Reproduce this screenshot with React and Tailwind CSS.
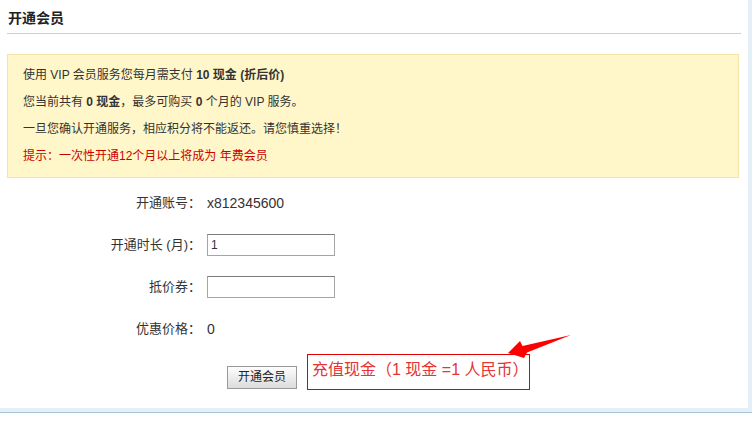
import React from "react";

export default function App() {
  return (
    <div className="relative w-[752px] h-[423px] overflow-hidden bg-white font-['Liberation_Sans','Noto_Sans_CJK_SC',sans-serif] text-[#333]">
      <div className="flex h-[408px]">
        <div className="w-[748px] h-full bg-white px-[7px]">
          {/* title */}
          <div className="h-[34px] border-b border-[#cfcfcf] pt-[10px]">
            <span className="block pl-[1px] text-[14px] leading-[16px] font-bold text-[#222]">开通会员</span>
          </div>

          {/* notice box */}
          <div className="mt-[20px] w-[732px] border border-[#f3e4a8] bg-[#fff7c9] pt-[7px] pb-[7px] pl-[15px] text-[12px] leading-[27px] text-[#333]">
            <div>
              使用 VIP 会员服务您每月需支付 <b>10 现金 (折后价)</b>
            </div>
            <div>
              您当前共有 <b>0 现金</b>，最多可购买 <b>0</b> 个月的 VIP 服务。
            </div>
            <div>一旦您确认开通服务，相应积分将不能返还。请您慎重选择！</div>
            <div className="text-[#cc0000]">提示：一次性开通12个月以上将成为 年费会员</div>
          </div>

          {/* form */}
          <div className="mt-[4px] -ml-[7px] grid grid-cols-[202px_1fr] text-[13px]">
            <div className="h-[42px] flex items-center justify-end pr-[1px]">开通账号：</div>
            <div className="h-[42px] flex items-center pl-[5px] text-[14px]">x812345600</div>

            <div className="h-[42px] flex items-center justify-end pr-[1px]">开通时长 (月)：</div>
            <div className="h-[42px] flex items-center pl-[5px]">
              <input
                defaultValue="1"
                className="w-[128px] h-[22px] border border-[#a5a5a5] border-t-[#7c7c7c] bg-white px-[3px] text-[12px] text-[#333] outline-none"
              />
            </div>

            <div className="h-[42px] flex items-center justify-end pr-[1px]">抵价券：</div>
            <div className="h-[42px] flex items-center pl-[5px]">
              <input className="w-[128px] h-[22px] border border-[#a5a5a5] border-t-[#7c7c7c] bg-white px-[3px] text-[12px] outline-none" />
            </div>

            <div className="h-[42px] flex items-center justify-end pr-[1px]">优惠价格：</div>
            <div className="h-[42px] flex items-center pl-[5px] text-[14px]">0</div>
          </div>

          {/* action row */}
          <div className="mt-[4px] flex items-end pl-[220px]">
            <button className="mb-[1px] w-[70px] h-[23px] border border-[#999] bg-gradient-to-b from-[#fdfdfd] to-[#dcdcdc] text-[12px] leading-[21px] text-[#222]">
              开通会员
            </button>
            <div className="ml-[10px] w-[223px] h-[36px] bg-[#e00000] p-[1px]">
              <div className="h-full bg-white pl-[4px] pt-[2px] text-[16px] leading-[26px] text-[#e63333] whitespace-nowrap">
                充值现金（1 现金 =1 人民币）
              </div>
            </div>
          </div>
        </div>
        <div className="flex-1 bg-[#e4eff8]" />
      </div>
      <div className="h-[4px] bg-[#e4eff8]" />
      <div className="h-[1px] bg-[#a6c3d8]" />

      {/* arrow */}
      <svg className="absolute left-[500px] top-[330px]" width="80" height="32" viewBox="0 0 80 32">
        <polygon points="8,23 20,11 22.5,16 71,5 27,22.5 24,28" fill="#ff0000" />
      </svg>
    </div>
  );
}
